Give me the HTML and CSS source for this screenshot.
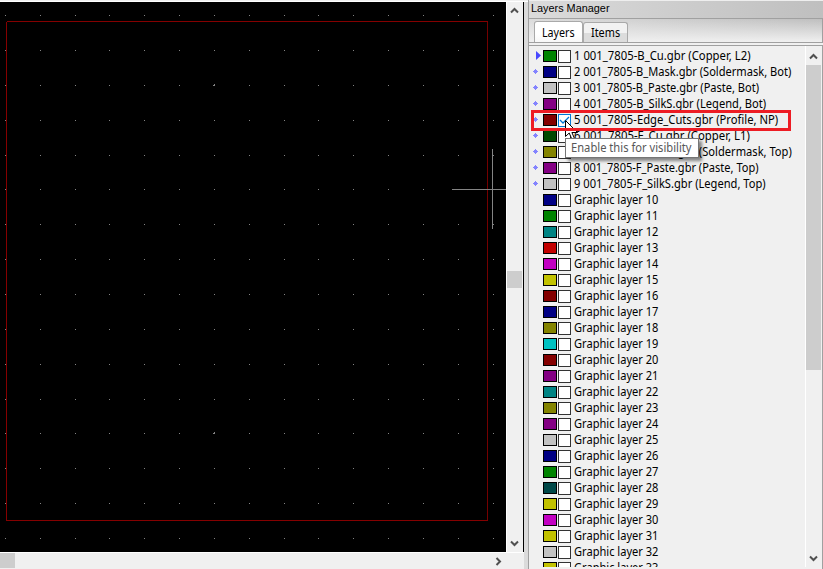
FILE: index.html
```html
<!DOCTYPE html>
<html lang="en">
<head>
<meta charset="utf-8">
<title>Layers Manager</title>
<link rel="stylesheet" href="styles.css">
</head>
<body>
<div class="app">
  <main class="viewer">
    <svg class="board" width="506" height="550" viewBox="0 2 506 550" shape-rendering="crispEdges" aria-label="Board view">
      <g id="grid" fill="#848484"></g>
      <path d="M7 21.5H488" stroke="#850000"/>
      <path d="M6.5 22V521M6 520.5H488" stroke="#850000" fill="none"/>
      <path d="M487.5 22V520" stroke="#750000"/>
      <path d="M452 189.500H506M492.500 149V229" stroke="#848484"/>
    </svg>
    <div class="vscroll">
      <svg class="arrow" width="9" height="7" viewBox="0 0 9 7"><path d="M1 5.500L4.500 2L8 5.500"/></svg>
      <div class="thumb"></div>
      <svg class="arrow" width="9" height="7" viewBox="0 0 9 7"><path d="M1 1.500L4.500 5L8 1.500"/></svg>
    </div>
    <div class="hscroll">
      <div class="thumb"></div>
      <svg class="arrow" width="7" height="9" viewBox="0 0 7 9"><path d="M1.500 1L5 4.500L1.500 8"/></svg>
    </div>
  </main>
  <aside class="manager">
    <h1 class="title"><span>Layers Manager</span></h1>
    <nav class="tabs">
      <div class="tab active"><span>Layers</span></div>
      <div class="tab"><span>Items</span></div>
    </nav>
    <div class="panel">
      <ul class="layers" id="layers"></ul>
      <div class="panel-scroll">
        <svg class="arrow" width="9" height="7" viewBox="0 0 9 7"><path d="M1 5.500L4.500 2L8 5.500"/></svg>
        <div class="thumb"></div>
        <svg class="arrow" width="9" height="7" viewBox="0 0 9 7"><path d="M1 1.500L4.500 5L8 1.500"/></svg>
      </div>
    </div>
  </aside>
  <svg class="cursor" width="14" height="21" viewBox="0 0 14 21"><path d="M.5 .5V16.500L4.200 13L7 19.500L9.500 18.500L6.900 12.500H12.500Z" fill="#fff" stroke="#000"/></svg>
  <div class="highlight"></div>
  <div class="tooltip"><span id="tip">Enable this for visibility</span></div>
</div>
<script src="app.js"></script>
</body>
</html>
```
FILE: styles.css
```css
* { box-sizing: border-box; }
body { margin: 0; overflow: hidden; font: 12px/16px "Noto Sans", sans-serif; color: #000; }
.app { position: relative; display: grid; grid-template-columns: 528px 295px; width: 823px; height: 569px; background: #dbdbdb; overflow: hidden; }
.viewer { display: grid; grid-template-columns: 506px 18px; grid-template-rows: 550px 17px; padding-top: 2px; background: linear-gradient(#f0f0f0 1px, #fff 1px 2px, transparent 2px); }
.board { display: block; background: #000; }
.vscroll { display: flex; flex-direction: column; align-items: flex-start; background: #f0f0f0; border-left: 1px solid #fff; border-right: 1px solid #000; padding: 5px 0; }
.vscroll .thumb { width: 15px; height: 17px; margin: 257px 0 auto; }
.hscroll { grid-column: 1 / 3; display: flex; align-items: center; justify-content: space-between; background: #f0f0f0; border-top: 1px solid #fff; padding-right: 22px; }
.hscroll .thumb { width: 15px; height: 15px; align-self: flex-start; }
.thumb { background: #cdcdcd; flex: none; }
.arrow { flex: none; fill: none; stroke: #505050; stroke-width: 2; }
.vscroll .arrow, .panel-scroll .arrow { margin-left: 3px; }
.manager { display: flex; flex-direction: column; min-height: 0; background: #f0f0f0; border-left: 1px solid #a0a0a0; }
.title { flex: none; margin: 0; height: 18px; padding-left: 2px; font: 11px/14px "Liberation Sans", sans-serif; background: linear-gradient(90deg, #dbdbdb, #bfbfbf); border-top: 1px solid #eee; }
.title span, .tab span, .name, .tooltip span { display: inline-block; white-space: nowrap; transform-origin: 0 50%; }
.tabs { flex: none; display: flex; align-items: flex-end; height: 25px; padding-left: 5px; border: 1px solid #a0a0a0; border-left: 0; background: linear-gradient(rgba(240,240,240,0), #f0f0f0), linear-gradient(90deg, #dbdbdb, #bfbfbf); }
.tab { width: 45px; height: 20px; padding: 0 7px; line-height: 19px; border: 1px solid #a9a9a9; border-bottom: 0; border-radius: 3px 3px 0 0; background: linear-gradient(#f2f2f2 50%, #dcdcdc 50%); }
.tab.active { width: 49px; height: 21px; line-height: 21px; background: linear-gradient(#fff 60%, #f7f7f7); }
.panel { flex: 1; min-height: 0; display: flex; margin-top: 2px; border-top: 1px solid #a0a0a0; border-right: 1px solid #a0a0a0; }
.layers { flex: 1; min-width: 0; height: 521px; margin: 0; padding: 2px 0 0 6px; list-style: none; overflow: hidden; }
.layer { display: flex; align-items: center; height: 16px; }
.marker { width: 6px; height: 9px; margin-right: 2px; flex: none; overflow: visible; }
.swatch { flex: none; width: 14px; height: 12px; border: 1px solid #000; margin-right: 1px; }
.check { flex: none; width: 13px; height: 13px; border: 1px solid #333; background: #fff; margin-right: 3px; }
.check.checked { border-color: #0078d7; }
.check svg { display: block; }
.panel-scroll { flex: none; width: 17px; height: 521px; border-left: 1px solid #fff; padding: 7px 0 5px; display: flex; flex-direction: column; align-items: flex-start; }
.panel-scroll .thumb { width: 15px; height: 305px; margin: 5px 0 auto; }
.highlight { position: absolute; left: 531px; top: 110px; width: 260px; height: 21px; border: 3px solid #ed1c24; }
.tooltip { position: absolute; left: 565px; top: 138px; width: 134px; height: 20px; padding-left: 5px; line-height: 18px; color: #575757; background: #fff; border: 1px solid #767676; box-shadow: 3px 3px 3px rgba(0,0,0,.45); }
.cursor { position: absolute; left: 565px; top: 120px; }
```
FILE: app.js
```js
const NS = 'http://www.w3.org/2000/svg';
const xs = [5, 40, 75, 109, 144, 179, 214, 249, 284, 318, 353, 388, 423, 458, 493];
const ys = [15, 50, 85, 120, 155, 189, 224, 259, 294, 329, 364, 399, 433, 468, 503, 538];
const grid = document.getElementById('grid');
function dot(x, y) {
  const r = document.createElementNS(NS, 'rect');
  r.setAttribute('x', x);
  r.setAttribute('y', y);
  r.setAttribute('width', 1);
  r.setAttribute('height', 1);
  grid.append(r);
}
xs.forEach(x => ys.forEach(y => dot(x, y)));
[[213, 85], [214, 84], [213, 433], [214, 432]].forEach(p => dot(...p));

// Label, swatch colour, label width
const files = [
  ['1 001_7805-B_Cu.gbr (Copper, L2)', '#008400', 177],
  ['2 001_7805-B_Mask.gbr (Soldermask, Bot)', '#000084', 217],
  ['3 001_7805-B_Paste.gbr (Paste, Bot)', '#c2c2c2', 185],
  ['4 001_7805-B_SilkS.gbr (Legend, Bot)', '#840084', 192],
  ['5 001_7805-Edge_Cuts.gbr (Profile, NP)', '#840000', 204],
  ['6 001_7805-F_Cu.gbr (Copper, L1)', '#004800', 176],
  ['7 001_7805-F_Mask.gbr (Soldermask, Top)', '#848400', 218],
  ['8 001_7805-F_Paste.gbr (Paste, Top)', '#840084', 185],
  ['9 001_7805-F_SilkS.gbr (Legend, Top)', '#c2c2c2', 192]
];
const colors = ['#000084', '#008400', '#008484', '#c20000', '#c200c2', '#c2c200', '#840000', '#000084',
  '#848400', '#00c2c2', '#840000', '#840084', '#008484', '#848400', '#840084', '#c2c2c2', '#000084',
  '#008400', '#004848', '#c2c200', '#c200c2', '#c2c200', '#c2c2c2', '#c2c200'];
const rows = files.concat(colors.map((c, i) => ['Graphic layer ' + (i + 10), c, 84]));

function fit(el, width) {
  el.style.transform = `scaleX(${width / el.offsetWidth})`;
}
const list = document.getElementById('layers');
rows.forEach(([name, color, width], i) => {
  const li = document.createElement('li');
  li.className = 'layer';
  const shape = i === 0 ? '<path d="M1 -1L6 3.500L1 8Z" fill="#4848ff"/>'
    : i < 9 ? '<path d="M-2 3.500H3M.5 1V6" stroke="#8484ff"/><path d="M-1 2h3v3h-3z" fill="#8484ff"/>' : '';
  const tick = i === 4 ? '<svg width="11" height="11"><path d="M1 5L4 8L10 2" fill="none" stroke="#0078d7" stroke-width="1.300"/></svg>' : '';
  li.innerHTML = `<svg class="marker" viewBox="0 0 6 9">${shape}</svg><span class="swatch" style="background:${color}"></span><span class="check${i === 4 ? ' checked' : ''}">${tick}</span><span class="name">${name}</span>`;
  list.append(li);
  fit(li.querySelector('.name'), width);
});
fit(document.getElementById('tip'), 121);
const tabs = document.querySelectorAll('.tab span');
fit(tabs[0], 33);
fit(tabs[1], 29);
fit(document.querySelector('.title span'), 79);
```
